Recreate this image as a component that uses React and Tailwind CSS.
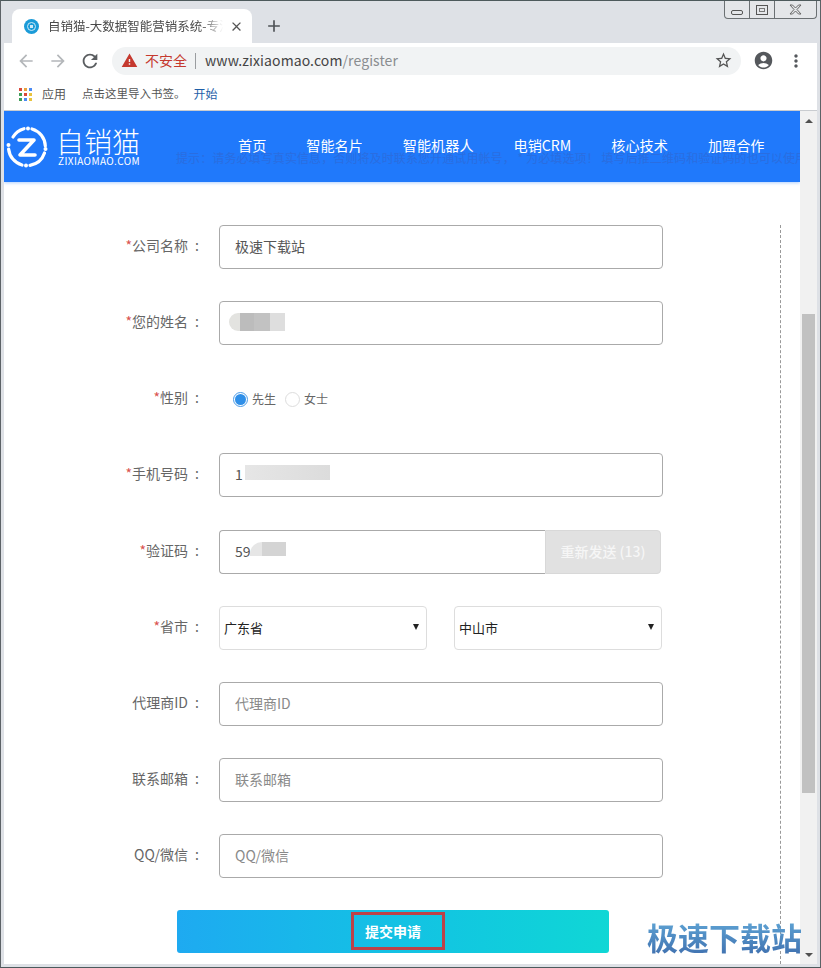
import React from 'react';
import {
  MdAccountCircle,
  MdAdd,
  MdArrowBack,
  MdArrowForward,
  MdClose,
  MdMoreVert,
  MdRefresh,
  MdStarBorder,
  MdWarning,
} from 'react-icons/md';

const navItems = ['首页', '智能名片', '智能机器人', '电销CRM', '核心技术', '加盟合作'];
const appColors = [
  'bg-[#d9483b]', 'bg-[#e8a33d]', 'bg-[#4a8af4]',
  'bg-[#3f9d58]', 'bg-[#d9483b]', 'bg-[#e8c33d]',
  'bg-[#3f9d58]', 'bg-[#4a8af4]', 'bg-[#e8c33d]',
];

const WindowControls = () => (
  <div className="absolute top-0 left-[723px] flex h-[18px] w-[93px] rounded-b-[4px] border border-t-0 border-[#6b7073] bg-[#e4e6e9]">
    <div className="flex w-[25px] items-center justify-center border-r border-[#6b7073] pt-[5px]">
      <div className="h-[5px] w-[12px] rounded-[2px] border border-[#555]" />
    </div>
    <div className="flex w-[25px] items-center justify-center border-r border-[#6b7073]">
      <div className="flex h-[10px] w-[12px] items-center justify-center border border-[#555]">
        <div className="h-[4px] w-[6px] border border-[#777]" />
      </div>
    </div>
    <div className="flex flex-1 items-center justify-center">
      <svg width="13" height="11" viewBox="0 0 13 11" fill="none" stroke="#666" strokeWidth="1">
        <path d="M1 1h2.500l3 3 3-3H12L8 5.500l4 4.500H9.500l-3-3-3 3H1l4-4.500z" />
      </svg>
    </div>
  </div>
);

const TabStrip = () => (
  <div className="flex h-[42px] items-end bg-[#dee1e6] pl-[8px]">
    <div className="flex h-[34px] w-[240px] items-center rounded-t-[8px] bg-white pl-[12px]">
      <div className="flex h-[15px] w-[15px] items-center justify-center rounded-full bg-[#1b9bd8]">
        <div className="flex h-[9px] w-[9px] items-center justify-center rounded-full border border-[#cfeaf7]">
          <div className="h-[3px] w-[3px] bg-[#cfeaf7]" />
        </div>
      </div>
      <div className="ml-[9px] w-[175px] overflow-hidden whitespace-nowrap text-[12.500px] text-[#4a4a4a] [mask-image:linear-gradient(to_right,black_88%,transparent)]">
        自销猫-大数据智能营销系统-专注
      </div>
      <MdClose className="ml-[6px] text-[15px] text-[#555]" />
    </div>
    <MdAdd className="mb-[7px] ml-[12px] text-[20px] text-[#4f5357]" />
  </div>
);

const Toolbar = () => (
  <div className="flex h-[35px] items-center bg-white">
    <MdArrowBack className="ml-[12px] text-[20px] text-[#b4b7ba]" />
    <MdArrowForward className="ml-[12px] text-[20px] text-[#b4b7ba]" />
    <MdRefresh className="ml-[11px] text-[22px] text-[#5a5d60]" />
    <div className="ml-[11px] flex h-[28px] w-[629px] items-center rounded-full bg-[#f1f3f4] pl-[9px] pr-[8px]">
      <MdWarning className="text-[17px] text-[#c5392f]" />
      <span className="ml-[7px] text-[14px] text-[#c5392f]">不安全</span>
      <span className="ml-[8px] h-[16px] w-px bg-[#9a9da0]" />
      <span className="ml-[9px] text-[14px] tracking-[0.1px] text-[#444]">
        www.zixiaomao.com<span className="text-[#8a8d90]">/register</span>
      </span>
      <MdStarBorder className="ml-auto text-[19px] text-[#555]" />
    </div>
    <MdAccountCircle className="ml-[12px] text-[21px] text-[#55585c]" />
    <MdMoreVert className="ml-[12px] text-[20px] text-[#55585c]" />
  </div>
);

const Bookmarks = () => (
  <div className="flex h-[33px] items-center border-b border-[#c9ccd0] bg-white pl-[15px] text-[12px] text-[#555]">
    <div className="grid h-[13px] w-[13px] grid-cols-3 gap-[2px]">
      {appColors.map((color, i) => (
        <span key={i} className={color} />
      ))}
    </div>
    <span className="ml-[10px]">应用</span>
    <span className="ml-[16px] text-[11.500px]">点击这里导入书签。</span>
    <span className="ml-[8px] text-[#1f5fa8]">开始</span>
  </div>
);

const LogoMark = () => (
  <svg width="44" height="44" viewBox="0 0 44 44" fill="none" stroke="white" strokeLinecap="round">
    <path d="M8 12A18.500 18.500 0 0 1 19 3.700" strokeWidth="3.200" />
    <path d="M27 4A18.500 18.500 0 0 1 40.300 21" strokeWidth="3.200" />
    <path d="M39.500 28A18.500 18.500 0 0 1 25 40.300" strokeWidth="3.200" />
    <path d="M17 40A18.500 18.500 0 0 1 3.600 24" strokeWidth="3.200" />
    <path d="M14 15h15L15 30h15" strokeWidth="3.600" strokeLinejoin="round" />
    <circle cx="23" cy="3.500" r="2" fill="white" stroke="none" />
    <circle cx="3.500" cy="20" r="2" fill="white" stroke="none" />
    <circle cx="40.500" cy="24" r="2" fill="white" stroke="none" />
    <circle cx="21" cy="40.500" r="2" fill="white" stroke="none" />
  </svg>
);

const Header = () => (
  <div className="relative flex h-[71px] items-center overflow-hidden bg-[#2079fb] shadow-[0_1px_3px_rgba(32,121,251,0.35)]">
    <div className="absolute left-[172px] top-[38px] whitespace-nowrap text-[12px] tracking-[0.1px] text-[#2a6de0]">
      提示：请务必填写真实信息，否则将及时联系您开通试用帐号， * 为必填选项！ 填写后推二维码和验证码的也可以使用
    </div>
    <div className="relative ml-[1px]">
      <LogoMark />
    </div>
    <div className="relative ml-[9px] flex w-[84px] flex-col text-white">
      <span className="-ml-[2px] text-[28px] font-light leading-[28px]">自销猫</span>
      <span className="text-[10px] leading-[11px] tracking-[0.4px]">ZIXIAOMAO.COM</span>
    </div>
    <nav className="relative ml-[96px] flex gap-[40px] pb-[2px] text-[14.150px] text-white">
      {navItems.map((item) => (
        <span key={item}>{item}</span>
      ))}
    </nav>
  </div>
);

const FormLabel = ({ required, children }) => (
  <div className="flex w-[196px] shrink-0 items-center justify-end pb-[3px] text-[14px] text-[#666]">
    {required && <span className="text-[#d9534f]">*</span>}
    <span>{children}</span>
    <span className="ml-[7px] w-[5px]">:</span>
  </div>
);

const FormRow = ({ label, required, className = 'mb-[32px]', children }) => (
  <div className={`flex h-[44px] items-center ${className}`}>
    <FormLabel required={required}>{label}</FormLabel>
    <div className="ml-[19px] flex items-center">{children}</div>
  </div>
);

const TextInput = ({ value, placeholder, className = 'w-[444px] rounded-[4px]' }) => (
  <input
    readOnly
    value={value || ''}
    placeholder={placeholder}
    className={`h-[44px] border border-[#aaa] bg-white px-[15px] pb-[3px] text-[14px] text-[#555] outline-none placeholder:text-[#8a8a8a] ${className}`}
  />
);

const SelectBox = ({ value, className = '' }) => (
  <div className={`relative ${className}`}>
    <select
      defaultValue={value}
      className="h-[44px] w-[208px] appearance-none rounded-[4px] border border-[#ddd] bg-white pl-[4px] text-[13px] text-[#222] outline-none"
    >
      <option>{value}</option>
    </select>
    <span className="pointer-events-none absolute right-[8px] top-[18px] h-0 w-0 border-x-[3.500px] border-t-[6px] border-x-transparent border-t-[#222]" />
  </div>
);

const Radio = ({ checked, label }) => (
  <div className="flex items-center text-[12px] text-[#666]">
    <span className={`flex h-[15px] w-[15px] items-center justify-center rounded-full border ${checked ? 'border-[#4a9be8]' : 'border-[#ddd]'}`}>
      {checked && <span className="h-[11px] w-[11px] rounded-full bg-[#2f8fe8]" />}
    </span>
    <span className="ml-[4px]">{label}</span>
  </div>
);

const RegisterForm = () => (
  <div className="mt-[43px] flex w-[777px] flex-1 flex-col border-r border-dashed border-[#999]">
    <FormRow label="公司名称" required>
      <TextInput value="极速下载站" />
    </FormRow>
    <FormRow label="您的姓名" required>
      <div className="relative">
        <TextInput />
        <div className="absolute left-[10px] top-[12px] flex h-[18px]">
          <span className="w-[11px] rounded-l-full bg-[#e3e3e0]" />
          <span className="w-[14px] bg-[#bcbcbc]" />
          <span className="w-[16px] bg-[#c2c2c2]" />
          <span className="w-[15px] bg-[#dedede]" />
        </div>
      </div>
    </FormRow>
    <FormRow label="性别" required>
      <div className="ml-[14px] flex gap-[9px]">
        <Radio checked label="先生" />
        <Radio label="女士" />
      </div>
    </FormRow>
    <FormRow label="手机号码" required className="mb-[33px]">
      <div className="relative">
        <TextInput value="1" />
        <div className="absolute left-[26px] top-[12px] h-[15px] w-[85px] bg-gradient-to-r from-[#e6e6e6] to-[#dcdcdc]" />
      </div>
    </FormRow>
    <FormRow label="验证码" required>
      <div className="relative flex">
        <TextInput value="59" className="w-[326px] rounded-l-[4px] border-r-0" />
        <div className="absolute left-[31px] top-[12px] flex h-[14px]">
          <span className="w-[12px] rounded-tl-full bg-[#e6e6e6]" />
          <span className="w-[24px] bg-[#d4d4d4]" />
        </div>
        <button className="h-[44px] w-[116px] rounded-r-[4px] border border-[#d8d8d8] bg-[#e1e1e1] pb-[2px] text-[14px] font-medium text-[#f6f6f6]">
          重新发送 (13)
        </button>
      </div>
    </FormRow>
    <FormRow label="省市" required>
      <SelectBox value="广东省" />
      <SelectBox value="中山市" className="ml-[27px]" />
    </FormRow>
    <FormRow label="代理商ID">
      <TextInput placeholder="代理商ID" />
    </FormRow>
    <FormRow label="联系邮箱">
      <TextInput placeholder="联系邮箱" />
    </FormRow>
    <FormRow label="QQ/微信">
      <TextInput placeholder="QQ/微信" />
    </FormRow>
    <div className="relative ml-[173px] flex h-[43px] w-[432px] shrink-0 items-center justify-center rounded-[3px] bg-gradient-to-r from-[#1eaaf1] to-[#10d7d5] pb-[1px] text-[14px] font-bold text-white">
      提交申请
      <div className="absolute left-[174px] top-[2px] h-[38px] w-[94px] border-[3px] border-[#bc4248]" />
    </div>
  </div>
);

const Scrollbar = () => (
  <div className="flex w-[17px] shrink-0 flex-col items-center bg-[#f1f1f1]">
    <span className="mt-[8px] h-0 w-0 border-x-[4px] border-b-[4px] border-x-transparent border-b-[#505050]" />
    <div className="mt-[191px] h-[479px] w-[13px] bg-[#c1c1c1]" />
    <span className="mt-[160px] h-0 w-0 border-x-[4px] border-t-[4px] border-x-transparent border-t-[#505050]" />
  </div>
);

const App = () => (
  <div className="relative h-[968px] w-[821px] overflow-hidden border border-t-[#4d5a5c] border-x-[#5c6266] border-b-[#4d5a5c] font-['Noto_Sans_CJK_SC','Microsoft_YaHei',sans-serif]">
    <div className="flex h-full flex-col bg-[#dee1e6] px-[3px]">
      <TabStrip />
      <Toolbar />
      <Bookmarks />
      <div className="flex h-[853px]">
        <div className="flex w-[796px] flex-col overflow-hidden bg-white">
          <Header />
          <RegisterForm />
        </div>
        <Scrollbar />
      </div>
    </div>
    <WindowControls />
    <div className="absolute left-[646px] top-[916px] bg-gradient-to-b from-[#62a9d8] to-[#3f6fae] bg-clip-text text-[31px] font-bold leading-[40px] text-transparent">
      极速下载站
    </div>
  </div>
);

export default App;
